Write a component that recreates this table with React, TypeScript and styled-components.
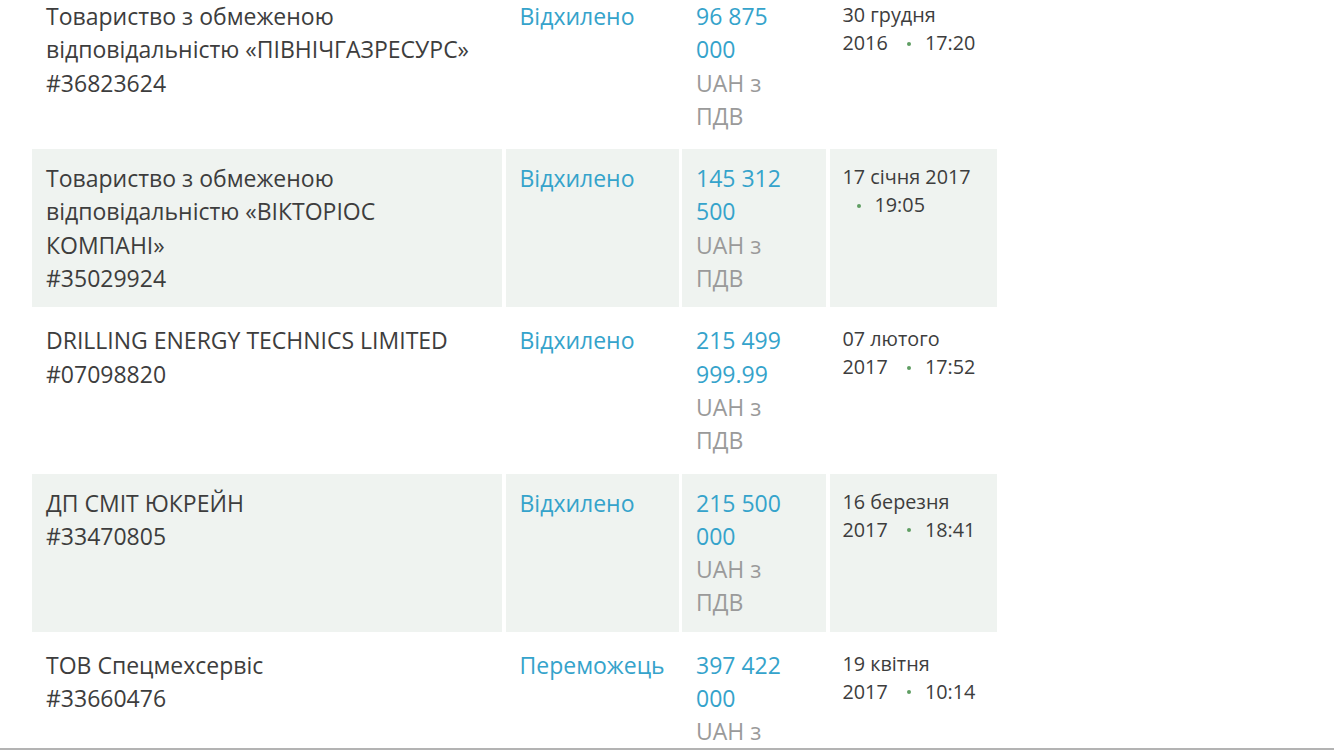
import React from "react";
import styled, { createGlobalStyle } from "styled-components";

const GlobalStyle = createGlobalStyle`
  html, body {
    margin: 0;
    padding: 0;
    background: #ffffff;
  }
  body {
    font-family: "Open Sans", "Noto Sans", sans-serif;
    color: #3d3d3d;
  }
`;

const Page = styled.div`
  height: 750px;
  box-sizing: border-box;
  overflow: hidden;
  border-bottom: 2px solid #b3b3b3;
  padding-left: 32px;
`;

const Table = styled.div`
  margin-top: -13px;
  width: 965px;
  display: grid;
  grid-template-columns: 470px 173px 144px 167px;
  column-gap: 3.5px;
  row-gap: 4px;
`;

const Cell = styled.div<{ $shaded: boolean }>`
  background: ${(p) => (p.$shaded ? "#eff3f0" : "transparent")};
  padding: 13px 14px 12px 14px;
  font-size: 23px;
  line-height: 33.3px;
  box-sizing: border-box;
  &.amount {
    padding-right: 28px;
  }
  &.date {
    padding: 14px 21px 12px 13px;
    font-size: 19.8px;
    line-height: 28px;
  }
`;

const Status = styled.span`
  color: #35a3cb;
`;

const Amount = styled.div`
  color: #35a3cb;
`;

const Currency = styled.div`
  color: #9a9a9a;
`;

const Time = styled.span`
  white-space: nowrap;
`;

const Dot = styled.span`
  display: inline-block;
  width: 4px;
  height: 4px;
  border-radius: 50%;
  background: #5f9e62;
  vertical-align: middle;
  margin: -2px 14px 0 14px;
`;

interface Bid {
  name: string;
  code: string;
  status: string;
  amount: string;
  date: string;
  time: string;
}

const bids: Bid[] = [
  {
    name: "Товариство з обмеженою відповідальністю «ПІВНІЧГАЗРЕСУРС»",
    code: "#36823624",
    status: "Відхилено",
    amount: "96 875 000",
    date: "30 грудня 2016",
    time: "17:20",
  },
  {
    name: "Товариство з обмеженою відповідальністю «ВІКТОРІОС КОМПАНІ»",
    code: "#35029924",
    status: "Відхилено",
    amount: "145 312 500",
    date: "17 січня 2017",
    time: "19:05",
  },
  {
    name: "DRILLING ENERGY TECHNICS LIMITED",
    code: "#07098820",
    status: "Відхилено",
    amount: "215 499 999.99",
    date: "07 лютого 2017",
    time: "17:52",
  },
  {
    name: "ДП СМІТ ЮКРЕЙН",
    code: "#33470805",
    status: "Відхилено",
    amount: "215 500 000",
    date: "16 березня 2017",
    time: "18:41",
  },
  {
    name: "ТОВ Спецмехсервіс",
    code: "#33660476",
    status: "Переможець",
    amount: "397 422 000",
    date: "19 квітня 2017",
    time: "10:14",
  },
];

const App: React.FC = () => {
  return (
    <>
      <GlobalStyle />
      <Page>
        <Table>
          {bids.map((b, i) => {
            const shaded = i % 2 === 1;
            return (
              <React.Fragment key={b.code}>
                <Cell $shaded={shaded}>
                  <div>{b.name}</div>
                  <div>{b.code}</div>
                </Cell>
                <Cell $shaded={shaded}>
                  <Status>{b.status}</Status>
                </Cell>
                <Cell $shaded={shaded} className="amount">
                  <Amount>{b.amount}</Amount>
                  <Currency>UAH з ПДВ</Currency>
                </Cell>
                <Cell $shaded={shaded} className="date">
                  {b.date}{" "}
                  <Time>
                    <Dot />
                    {b.time}
                  </Time>
                </Cell>
              </React.Fragment>
            );
          })}
        </Table>
      </Page>
    </>
  );
};

export default App;
